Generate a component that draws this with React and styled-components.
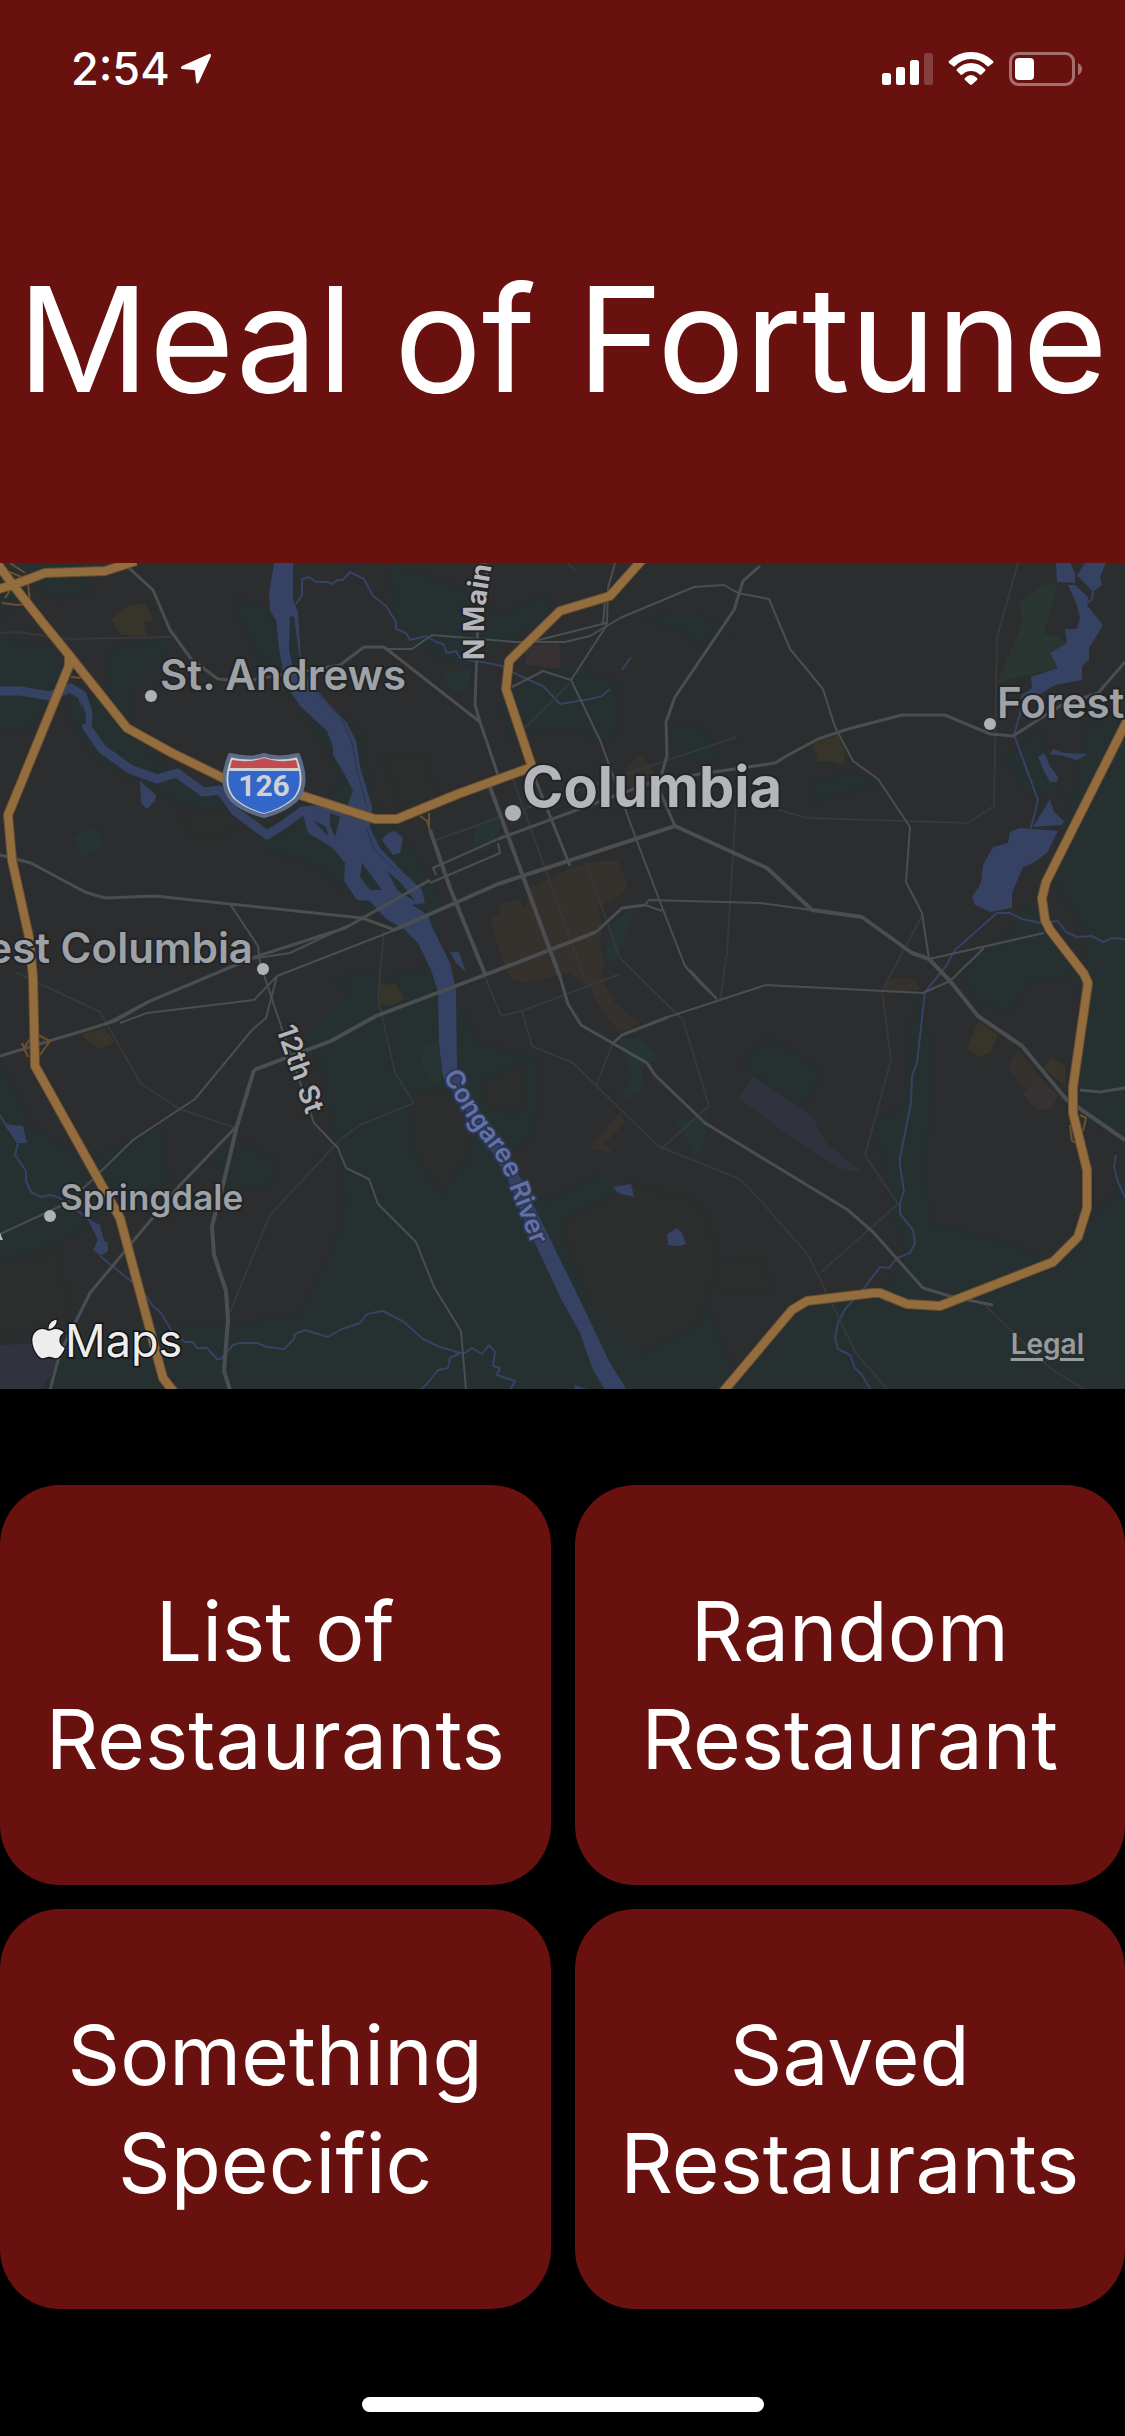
import React from "react";
import styled, { createGlobalStyle } from "styled-components";
import { FaApple } from "react-icons/fa";

const colors = {
  brand: "#68110f",
  land: "#2c2d2f",
  park: "#263030",
  parkBright: "#263534",
  field: "#2b2e2d",
  forest: "#2a3632",
  campus: "#35312d",
  shop: "#373429",
  clinic: "#373133",
  airport: "#30333d",
  water: "#364264",
  road: "#4b4e50",
  minor: "#363839",
  highway: "#936d3d",
  highwayEdge: "#6b4f2f",
  town: "#9da2a6",
  city: "#b4b6bb",
};

const GlobalStyle = createGlobalStyle`
  * { box-sizing: border-box; }
  body {
    margin: 0;
    background: #000;
    color: #fff;
    font-family: Inter, "Liberation Sans", sans-serif;
  }
`;

const Screen = styled.div`
  display: flex;
  flex-direction: column;
  min-height: 100vh;
`;

const Header = styled.header`
  display: flex;
  flex-direction: column;
  background: ${colors.brand};
`;

const StatusBar = styled.div`
  display: flex;
  align-items: center;
  justify-content: space-between;
  height: 115px;
  padding: 22px 43px 0 71px;
`;

const StatusGroup = styled.div`
  display: flex;
  align-items: center;
  gap: ${(p) => p.$gap}px;
`;

const Time = styled.time`
  font-size: 45px;
  line-height: 48px;
  font-weight: 500;
`;

const Title = styled.h1`
  margin: 0;
  padding: 124px 0;
  font-size: 146px;
  line-height: 200px;
  font-weight: 400;
  text-align: center;
  white-space: nowrap;
`;

const MapPanel = styled.section`
  position: relative;
  background: ${colors.land};
`;

const MapDrawing = styled.svg`
  display: block;
  width: 100%;
  height: auto;
  font-family: Inter, "Liberation Sans", sans-serif;
`;

const Label = styled.text`
  font-size: ${(p) => p.$size}px;
  font-weight: ${(p) => p.$weight || 600};
  fill: ${(p) => p.$color || colors.town};
  stroke: ${(p) => p.$halo || "#232426"};
  stroke-width: 4px;
  stroke-linejoin: round;
  paint-order: stroke;
`;

const Attribution = styled.div`
  position: absolute;
  left: 32px;
  bottom: 20px;
  display: flex;
  align-items: center;
  color: #ededed;
  font-size: 45px;
  line-height: 56px;
  paint-order: stroke;
  -webkit-text-stroke: 3px #111;

  svg {
    width: 33px;
    height: 44px;
    margin-bottom: 4px;
    overflow: visible;
    stroke: #111;
    stroke-width: 28px;
    paint-order: stroke;
  }
`;

const LegalLink = styled.a`
  position: absolute;
  right: 41px;
  bottom: 29px;
  color: #999c9d;
  font-size: 28px;
  line-height: 32px;
  font-weight: 600;
  text-decoration: underline;
  text-decoration-thickness: 3px;
  text-underline-offset: 4px;
`;

const Choices = styled.nav`
  display: grid;
  grid-template-columns: 1fr 1fr;
  gap: 24px;
  padding-top: 96px;
`;

const Choice = styled.button`
  min-height: 400px;
  padding: 2px 32px 0;
  border: 0;
  border-radius: 60px;
  background: ${colors.brand};
  color: #fff;
  font: inherit;
  font-size: 82px;
  line-height: 108px;
`;

const HomeIndicator = styled.div`
  width: 402px;
  height: 15px;
  margin: auto auto 24px;
  border-radius: 8px;
  background: #fff;
`;

const parks = [
  "M0 0H75L90 30 60 38 30 20 0 55Z",
  "M0 75 60 84 62 130 40 150 20 172 0 165Z",
  "M105 88 140 78 172 76 160 100 130 130 134 150 110 165 92 150 108 125Z",
  "M232 35 262 40 275 60 290 110 320 135 360 170 375 240 400 270 440 330 440 400 480 480 540 495 535 570 500 600 545 640 600 610 640 650 700 720 740 827H0V780L240 760 300 750 330 690 345 640 320 500 300 480 350 430 430 400 400 370 350 330 310 300 270 290 240 260 180 240 130 215 95 195 70 160 60 120 110 140 160 200 240 240 330 240 340 210 310 160 280 120 250 80Z",
  "M390 0 450 20 500 50 550 30 545 60 500 80 470 110 430 90 395 60Z",
  "M500 130 560 100 620 120 618 165 600 180 575 165 540 170 510 180Z",
  "M642 58 665 50 700 50 730 70 700 80 675 65Z",
  "M667 160 700 165 720 190 718 200 690 200 670 180Z",
  "M815 215 860 210 885 218 850 230 812 240Z",
  "M1005 195 1040 165 1060 230 1030 235Z",
  "M1085 165 1125 140V570L1080 560 1080 430 1060 370 1030 340 1000 380 960 400 975 440 1010 450 1030 420 1088 410 1085 365 1055 320Z",
  "M915 420 935 500 925 600 930 660 1010 680 1050 700 1125 620V827H725L800 740 880 730 905 690 890 640 875 560 905 540Z",
  "M740 500 768 475 820 505 812 530 795 545Z",
  "M0 500 30 560 90 600 160 560 170 620 120 640 60 680 0 700Z",
  "M210 590 250 580 280 600 265 625 230 630Z",
  "M330 415 380 410 400 430 360 440Z",
];

const brightParks = [
  "M74 275 94 265 104 282 80 294Z",
  "M443 110 472 106 466 128 453 130Z",
  "M476 262 495 252 502 263 485 290 472 285Z",
  "M610 365 637 340 628 365 615 400 605 395Z",
  "M423 482 440 479 442 518 434 520 422 505Z",
  "M618 475 640 475 660 495 640 505 645 525 620 540 632 510Z",
  "M675 558 708 552 705 580 695 597 690 580Z",
];

const fields = [
  "M410 530 445 525 470 560 465 600 440 630 415 590Z",
  "M480 520 520 500 528 545 515 550 490 545Z",
  "M560 660 630 620 700 640 720 690 700 760 640 790 590 740Z",
  "M380 190 425 195 440 235 400 240Z",
  "M182 250 230 245 295 245 270 262 195 275Z",
  "M0 700 60 690 70 760 0 770Z",
  "M725 700 765 695 770 725 725 727Z",
];

const waterAreas = [
  "M274 0H293V37L298 49 301 97 310 120 347 160 356 178 360 204 372 244 370 265 380 285 403 309 422 327 425 340 412 342 428 352 432 364 450 400 456 427 457 504 470 540 503 580 520 614 552 680 580 737 610 800 627 827H605L593 807 580 770 560 734 535 680 520 647 507 614 477 564 443 514 439 480 438 429 431 407 418 380 405 367 385 355 370 338 357 337 344 318 345 300 333 285 308 270 302 248 320 243 347 244 353 228 345 212 333 192V184L327 168 300 143 285 120 279 85 276 57 270 48 269 30Z",
  "M140 218 156 232 155 238 147 246 141 240Z",
  "M382 277 388 270 395 268 403 275 400 290 393 292Z",
  "M450 389 459 389 466 409 456 400Z",
  "M972 334 981 320 983 302 993 284 1008 280 1010 269 1020 265 1058 268 1047 290 1033 300 1023 304 1012 330 1012 345 990 349 975 342Z",
  "M1050 236 1054 249 1064 258 1062 262 1033 264Z",
  "M1038 194 1044 190 1050 203 1058 214 1057 219 1050 219 1044 208Z",
  "M1050 191 1053 186 1064 190 1088 191 1077 197 1063 193Z",
  "M1056 0H1070L1075 10V20L1057 19Z",
  "M1085 0H1106L1100 14 1102 22 1093 29 1077 12Z",
  "M1068 22 1075 22 1088 34 1087 42 1103 62 1089 85V97L1082 103V117L1055 122 1042 130 1022 144 1021 132 1032 125 1031 114 1058 105 1050 90 1067 80 1065 66 1077 66 1080 55 1077 42Z",
  "M5 561 23 563 27 580 18 580Z",
  "M87 655 100 662 104 678 108 680 108 688 101 693 93 687 98 677Z",
  "M613 624 631 621 634 634 618 630Z",
  "M667 671 677 665 682 670 686 681 680 683 668 682Z",
  "M575 822 590 827H574Z",
];

const islands = [
  "M290 53 294 54 300 97 294 110 289 87Z",
  "M82 140 86 152V161H80Z",
  "M313 257 326 264 328 273Z",
  "M330 250 340 254 335 274 330 262Z",
  "M362 300 382 327 370 327 360 314Z",
  "M387 308 401 320 415 338 398 328Z",
];

const streams = [
  "M296 41 302 32V16L309 14 316 19 328 19 332 21 337 17 343 17 350 9 364 16 373 33 386 43 396 59V66L406 70 410 77 426 73 436 79 443 81 447 90 456 88 460 95 473 98 483 99 502 103 520 113 543 123 560 141 590 136 602 133 610 126",
  "M622 107 631 94",
  "M1093 29 1092 36 1086 41",
  "M1022 144 1014 172 1038 237 1031 265",
  "M998 349 955 387 946 403 925 429 917 500 912 513 911 540 900 595V603L904 628 900 640V651L913 667 915 680 910 690 897 695 889 705 880 704 865 724 845 746 838 760 835 775 838 786 850 792 855 805 862 812 871 827",
  "M998 350H1010L1022 356 1040 360 1058 358 1066 369 1077 374 1092 373 1103 379 1112 375 1125 376",
  "M1116 592 1114 604 1118 619 1126 636",
  "M0 552 7 564 18 580 15 592 26 608V618L31 629 41 634 50 632 58 634 90 657",
  "M100 693 143 728 152 742 161 750 173 770 185 779H193L197 785H207L217 796H221L233 782 240 780H257L267 784 284 786 294 776 295 771 305 767 328 774 342 766 360 760 367 751 383 748 404 759 423 776 440 784 460 790H465L472 785 482 791 489 782 495 789 493 803 500 805 497 812 515 818 510 827",
  "M460 790 450 795 448 805 438 807 426 822 420 827",
];

const waterEdges = [
  "M310 124 341 154 352 180 357 208 367 244",
  "M366 264 374 286 396 308",
];

const minorRoads = [
  "M0 70 17 69 70 76 171 74",
  "M1018 0 997 74 994 243 968 260 808 255 778 247",
  "M436 277 500 254",
  "M513 216 585 417",
  "M524 246 736 174",
  "M586 300 620 395 683 457 709 543 660 587",
  "M736 241 727 390 720 437",
  "M384 367 378 435 395 510 414 540 360 562 340 577 270 652 230 749",
  "M485 414 501 453 522 448 620 411",
  "M522 448 532 483 573 500 658 583 740 616 760 637 808 692 856 790 888 827",
  "M613 479 596 523",
  "M922 353 882 428 891 497 865 592 898 641 821 709",
  "M15 409 100 449 141 521 180 546 236 565",
  "M985 742 1050 805 1085 827",
  "M565 -3 575 8",
  "M523 167 570 120",
];

const roads = [
  { w: 3, d: "M129 5 153 27 170 67 192 97 218 116 245 118 300 109 340 102 364 84H384L480 159 498 212" },
  { w: 2, d: "M384 86H412L432 72 515 79H565L590 73 620 55 694 24 724 22 738 30 769 36 790 86 823 126 835 164 853 198 878 216 910 264 906 319 922 350 929 396" },
  { w: 3, d: "M476 -3 488 3 478 60 475 142 480 159" },
  { w: 2, d: "M615 0 608 25 607 60 605 65 571 117 600 177 635 273 662 344 685 403 700 420 717 436" },
  { w: 2, d: "M535 78 606 60M605 37 603 60" },
  { w: 2, d: "M512 124 543 108 571 117" },
  { w: 3, d: "M760 3 743 18 734 47 675 134 666 159 667 192 661 214 658 224 675 263" },
  { w: 3, d: "M498 276 650 220 700 211 775 200 790 191 818 176 848 166 902 152H945L990 171 1013 173 1060 143 1098 130 1125 99" },
  { w: 4, d: "M394 367 498 321 675 263 767 305 812 347 862 354 912 390 929 396 950 418 978 453 1022 483 1066 536 1125 577" },
  { w: 2, d: "M929 396 1044 370M950 418 984 385" },
  { w: 3, d: "M532 208 570 303" },
  { w: 4, d: "M490 224 560 414" },
  { w: 3, d: "M560 414 568 441 581 462 647 500 655 512 705 560 848 647 873 669 923 725 953 734 993 742" },
  { w: 4, d: "M430 267 450 325 485 411" },
  { w: 2, d: "M498 280 500 290 430 320M498 276 433 305 436 312" },
  { w: 3, d: "M0 292 31 300 85 329 105 335 155 333 230 341 362 355 395 367" },
  { w: 3, d: "M0 493 115 458 150 438 255 394 345 365 430 317" },
  { w: 2, d: "M105 461 145 440 250 396 290 390 347 363" },
  { w: 2, d: "M230 341 258 383 260 400 283 469 314 560 338 585 346 605 369 616 378 641 416 679 434 724 461 768 466 827" },
  { w: 2, d: "M120 460 147 450 254 437 277 413 395 367" },
  { w: 2, d: "M277 413 266 455 252 467 195 536 133 577 90 619 65 641 0 671" },
  { w: 4, d: "M254 507 331 478 376 453 490 410 596 369" },
  { w: 3, d: "M596 369 622 345 645 342" },
  { w: 2, d: "M645 342 649 337 760 340 812 347" },
  { w: 2, d: "M645 342 662 348" },
  { w: 4, d: "M254 507 237 563 223 622 212 663 214 692 226 728 228 757 224 808 230 827" },
  { w: 3, d: "M237 563 180 622 90 730 60 790 50 827" },
  { w: 3, d: "M612 481 622 472 668 454" },
  { w: 2, d: "M668 454 766 422 923 430 950 418" },
  { w: 2, d: "M690 407 717 436" },
  { w: 3, d: "M1080 527 1100 529 1125 525" },
];

const highways = [
  "M-6 -4 13 22 43 60 69 92 127 165 172 190 223 215 300 232 375 256H397L458 231 532 204 506 126 509 98 560 48 610 33 642 -3",
  "M-5 27 13 22 45 10 105 8 136 -2",
  "M69 90V103L8 252 12 297 29 374 33 414 35 503 120 655 163 815 174 829",
  "M1130 152 1046 319 1042 335 1045 357 1050 367 1084 411 1088 420 1073 524V550L1087 607V645L1078 674 1053 699 940 743 907 741 880 730H873L807 738 792 747 722 830",
];

const ramps = [
  "M0 5 24 15M10 0 25 10M2 40 18 42 30 40 28 20M5 35 15 20 20 38",
  "M22 488 34 470 50 478 40 492M28 494 22 480",
  "M420 253 427 258 430 267M429 250V262",
  "M1070 562 1072 578 1078 580M1080 552 1086 555 1083 568",
  "M71 114 81 115",
];

const towns = [
  { x: 151, y: 133, r: 6 },
  { x: 513, y: 250, r: 8 },
  { x: 990, y: 161, r: 6 },
  { x: 263, y: 406, r: 6 },
  { x: 50, y: 653, r: 6 },
];

function Shapes({ items, fill }) {
  return (
    <g fill={fill}>
      {items.map((d) => (
        <path key={d} d={d} />
      ))}
    </g>
  );
}

function Lines({ items, stroke, width }) {
  return (
    <g fill="none" stroke={stroke} strokeWidth={width} strokeLinejoin="round">
      {items.map((d) => (
        <path key={d} d={d} />
      ))}
    </g>
  );
}

function CityMap() {
  return (
    <MapDrawing viewBox="0 0 1125 826" role="img" aria-label="Map of Columbia">
      <Shapes items={parks} fill={colors.park} />
      <Shapes items={fields} fill={colors.field} />
      <Shapes items={brightParks} fill={colors.parkBright} />
      <path fill={colors.forest} d="M1020 40 1043 22 1058 20 1044 70 1060 75 1067 80 1050 90 1058 105 1020 114 998 119 1008 94 1022 62Z" />
      <Shapes
        fill={colors.campus}
        items={[
          "M570 305 595 298 618 298 628 323 618 335 598 344 602 365 600 385 605 400 600 412 615 440 640 460 620 470 600 445 590 425 570 410 545 415 525 420 510 415 502 395 490 358 500 350 500 342 518 335 525 345 530 325Z",
          "M625 208 632 200 640 192 655 210 648 225 630 228Z",
          "M590 585 620 548 625 560 605 580 612 590Z",
          "M885 420 895 415 915 416 920 427 885 430Z",
          "M1008 505 1018 487 1045 520 1022 525Z",
        ]}
      />
      <Shapes
        fill={colors.shop}
        items={[
          "M112 57 125 44 145 40 154 57 144 60 147 73 120 72Z",
          "M812 180 838 172 845 190 844 202 832 198 818 198Z",
          "M80 471 105 465 115 480 98 486Z",
          "M380 422 395 421 405 435 392 443 380 440Z",
          "M967 485 978 458 998 472 990 490 980 494Z",
          "M1043 505 1052 495 1065 502V523Z",
        ]}
      />
      <Shapes fill={colors.clinic} items={["M526 83 559 80 561 106 526 102Z", "M1022 530 1040 515 1058 532 1052 545 1037 547Z"]} />
      <Shapes fill={colors.airport} items={["M738 535 753 513 812 553 826 580 863 610 840 605 800 580Z", "M0 782 55 780 60 800 40 827H0Z"]} />
      <Shapes fill={colors.water} items={waterAreas} />
      <path
        d="M0 128H20L50 133 70 125 82 132 88 150 87 164 102 186 130 206 157 216 177 210 203 229 220 227 235 248 267 272 283 262 302 248 325 246"
        fill="none"
        stroke={colors.water}
        strokeWidth="9"
        strokeLinejoin="round"
      />
      <Shapes fill={colors.park} items={islands} />
      <Lines items={waterEdges} stroke="#2a3448" width={1} />
      <Lines items={streams} stroke={colors.water} width={2} />
      <Lines items={minorRoads} stroke={colors.minor} width={2} />
      {roads.map((road) => (
        <Lines key={road.d} items={[road.d]} stroke={colors.road} width={road.w} />
      ))}
      <Lines items={ramps} stroke="#6b502e" width={2} />
      <Lines items={highways} stroke={colors.highwayEdge} width={10} />
      <Lines items={highways} stroke={colors.highway} width={8} />

      <g strokeLinejoin="round">
        <path d="M230 192Q250 197 264 192Q278 197 298 192Q310 221 296 237Q284 248 264 253Q244 248 232 237Q218 221 230 192Z" fill="#cfd1d4" stroke="#5d6b8b" strokeWidth="4" />
        <path d="M232 197Q250 200 264 195Q278 200 296 197L298 205H230Z" fill="#c04c50" />
        <path d="M229 208H299Q302 226 292 236Q280 246 264 250Q248 246 236 236Q226 226 229 208Z" fill="#3167c8" />
        <text x="264" y="233" textAnchor="middle" fontSize="30" fontWeight="700" fontFamily="Roboto, sans-serif" fill="#cfd1d4">126</text>
      </g>

      {towns.map((t) => (
        <circle key={t.x} cx={t.x} cy={t.y} r={t.r} fill="#aeb1b7" />
      ))}
      <Label $size={42} x="160" y="127">St. Andrews</Label>
      <Label $size={56} $weight={700} $color={colors.city} x="522" y="244">Columbia</Label>
      <Label $size={42} x="997" y="155">Forest</Label>
      <Label $size={42} x="253" y="400" textAnchor="end">West Columbia</Label>
      <Label $size={35} x="60" y="647">Springdale</Label>
      <path id="main-street" d="M484 97V55Q487 25 496 -20" fill="none" />
      <path id="twelfth-street" d="M276 466 316 580" fill="none" />
      <path id="river-course" d="M443 512Q462 550 484 578Q504 602 512 630L550 730" fill="none" />
      <Label $size={28} $weight={700} $color={colors.city}>
        <textPath href="#main-street">N Main</textPath>
      </Label>
      <Label $size={28} $color={colors.city}>
        <textPath href="#twelfth-street">12th St</textPath>
      </Label>
      <Label $size={26} $color="#6170a6" $halo="#2d3754">
        <textPath href="#river-course">Congaree River</textPath>
      </Label>
      <path d="M-2 665 3 677H-2Z" fill={colors.city} />
    </MapDrawing>
  );
}

function LocationIcon() {
  return (
    <svg width="32" height="32" viewBox="0 0 32 32" aria-hidden="true">
      <path d="M29 1 2 13Q0 15 2 16L14 17Q15 17 15 18L16 29Q17 32 19 29L31 3Q31 0 29 1Z" fill="#fff" />
    </svg>
  );
}

function SignalIcon() {
  return (
    <svg width="51" height="32" viewBox="0 0 51 32" fill="#fff" aria-hidden="true">
      <rect y="20" width="9" height="12" rx="2.5" />
      <rect x="14" y="14" width="9" height="18" rx="2.5" />
      <rect x="28" y="7" width="9" height="25" rx="2.5" />
      <rect x="42" width="9" height="32" rx="2.5" opacity="0.2" />
    </svg>
  );
}

function WifiIcon() {
  return (
    <svg width="46" height="33" viewBox="0 0 46 33" fill="#fff" aria-hidden="true">
      <path d="M1 9Q10 0 23 0T45 9Q46 10 45 11L41 14Q40 15 39 14Q32 7 23 7T7 14Q6 15 5 14L1 11Q0 10 1 9Z" />
      <path d="M9 17Q15 11 23 11T37 17Q38 18 37 19L33 23Q32 23 31 22Q28 19 23 19T15 22Q14 23 13 23L9 19Q8 18 9 17Z" />
      <path d="M17 26Q20 23 23 23T29 26Q30 27 29 28L24 32.500Q23 33 22 32.500L17 28Q16 27 17 26Z" />
    </svg>
  );
}

function BatteryIcon() {
  return (
    <svg width="73" height="34" viewBox="0 0 73 34" aria-hidden="true">
      <rect x="1.500" y="1.500" width="63" height="31" rx="8" fill="none" stroke="#a3706f" strokeWidth="3" />
      <rect x="6" y="6" width="19" height="22" rx="4" fill="#fff" />
      <path d="M69 11Q73 13 73 17T69 23Z" fill="#a3706f" />
    </svg>
  );
}

const choices = [
  ["List of", "Restaurants"],
  ["Random", "Restaurant"],
  ["Something", "Specific"],
  ["Saved", "Restaurants"],
];

export default function App() {
  return (
    <Screen>
      <GlobalStyle />
      <Header>
        <StatusBar>
          <StatusGroup $gap={10}>
            <Time>2:54</Time>
            <LocationIcon />
          </StatusGroup>
          <StatusGroup $gap={15}>
            <SignalIcon />
            <WifiIcon />
            <BatteryIcon />
          </StatusGroup>
        </StatusBar>
        <Title>Meal of Fortune</Title>
      </Header>
      <MapPanel>
        <CityMap />
        <Attribution>
          <FaApple aria-label="Apple" />
          Maps
        </Attribution>
        <LegalLink href="#legal">Legal</LegalLink>
      </MapPanel>
      <Choices>
        {choices.map(([first, second]) => (
          <Choice key={first + second} type="button">
            {first}
            <br />
            {second}
          </Choice>
        ))}
      </Choices>
      <HomeIndicator />
    </Screen>
  );
}
